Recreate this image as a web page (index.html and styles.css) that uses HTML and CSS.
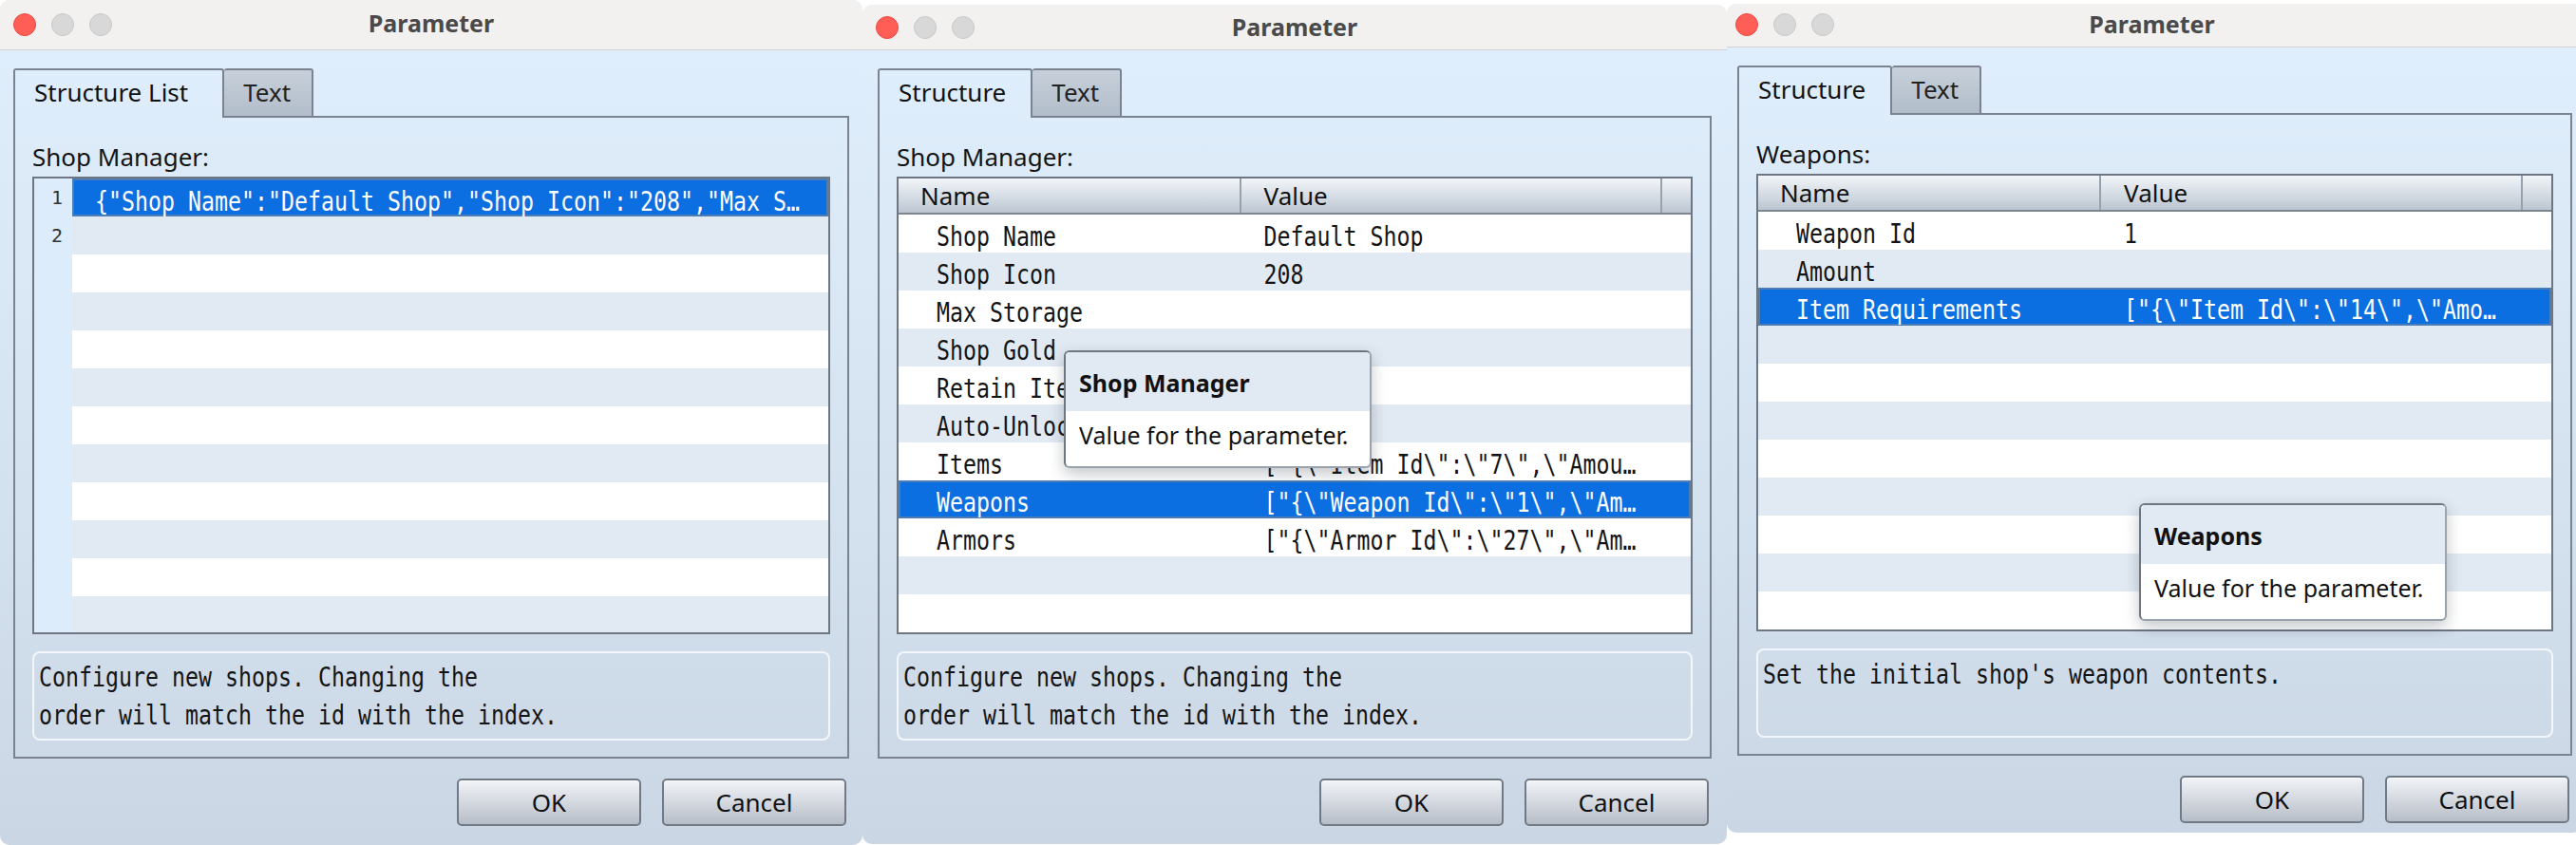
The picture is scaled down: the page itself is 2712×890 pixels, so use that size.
FILE: index.html
```html
<!DOCTYPE html>
<html lang="en">
<head>
  <meta charset="UTF-8" />
  <meta name="viewport" content="width=device-width, initial-scale=1.0" />
  <title>Parameter</title>
  <link rel="stylesheet" href="styles.css">
</head>
<body>
  <div class="desktop">

    <!-- structure list editor -->
    <div class="window first">
      <div class="titlebar">
        <div class="lights"><span class="dot close"></span><span class="dot"></span><span class="dot"></span></div>
        <div class="title">Parameter</div>
      </div>
      <div class="win-body">
        <div class="tabs">
          <div class="tab active wide">Structure List</div>
          <div class="tab">Text</div>
          <div class="tab-fill"></div>
        </div>
        <div class="panel">
          <div class="field-label">Shop Manager:</div>
          <div class="list-box">
            <div class="gutter">
              <div class="ln">1</div>
              <div class="ln">2</div>
            </div>
            <div class="lines">
              <div class="line selected"><span class="mono">{"Shop Name":"Default Shop","Shop Icon":"208","Max S…</span></div>
              <div class="line"></div>
              <div class="line"></div>
              <div class="line"></div>
              <div class="line"></div>
              <div class="line"></div>
              <div class="line"></div>
              <div class="line"></div>
              <div class="line"></div>
              <div class="line"></div>
              <div class="line"></div>
              <div class="line"></div>
            </div>
          </div>
          <div class="desc">
            <div class="mono">Configure new shops. Changing the</div>
            <div class="mono">order will match the id with the index.</div>
          </div>
        </div>
        <div class="buttons">
          <button>OK</button>
          <button>Cancel</button>
        </div>
      </div>
    </div>

    <!-- shop manager structure -->
    <div class="window second">
      <div class="titlebar">
        <div class="lights"><span class="dot close"></span><span class="dot"></span><span class="dot"></span></div>
        <div class="title">Parameter</div>
      </div>
      <div class="win-body">
        <div class="tabs">
          <div class="tab active">Structure</div>
          <div class="tab">Text</div>
          <div class="tab-fill"></div>
        </div>
        <div class="panel">
          <div class="field-label">Shop Manager:</div>
          <div class="table-box">
            <div class="thead">
              <div class="th">Name</div>
              <div class="th">Value</div>
              <div class="th"></div>
            </div>
            <div class="tbody">
              <div class="tr"><div class="td mono">Shop Name</div><div class="td mono">Default Shop</div></div>
              <div class="tr"><div class="td mono">Shop Icon</div><div class="td mono">208</div></div>
              <div class="tr"><div class="td mono">Max Storage</div><div class="td mono"></div></div>
              <div class="tr"><div class="td mono">Shop Gold</div><div class="td mono"></div></div>
              <div class="tr"><div class="td mono">Retain Items</div><div class="td mono"></div></div>
              <div class="tr"><div class="td mono">Auto-Unlock</div><div class="td mono"></div></div>
              <div class="tr"><div class="td mono">Items</div><div class="td mono">["{\"Item Id\":\"7\",\"Amou…</div></div>
              <div class="tr selected"><div class="td mono">Weapons</div><div class="td mono">["{\"Weapon Id\":\"1\",\"Am…</div></div>
              <div class="tr"><div class="td mono">Armors</div><div class="td mono">["{\"Armor Id\":\"27\",\"Am…</div></div>
              <div class="tr"></div>
              <div class="tr"></div>
            </div>
            <div class="tooltip tip-shop">
              <div class="tip-head">Shop Manager</div>
              <div class="tip-text">Value for the parameter.</div>
            </div>
          </div>
          <div class="desc">
            <div class="mono">Configure new shops. Changing the</div>
            <div class="mono">order will match the id with the index.</div>
          </div>
        </div>
        <div class="buttons">
          <button>OK</button>
          <button>Cancel</button>
        </div>
      </div>
    </div>

    <!-- weapons structure -->
    <div class="window third">
      <div class="titlebar">
        <div class="lights"><span class="dot close"></span><span class="dot"></span><span class="dot"></span></div>
        <div class="title">Parameter</div>
      </div>
      <div class="win-body">
        <div class="tabs">
          <div class="tab active">Structure</div>
          <div class="tab">Text</div>
          <div class="tab-fill"></div>
        </div>
        <div class="panel">
          <div class="field-label">Weapons:</div>
          <div class="table-box">
            <div class="thead">
              <div class="th">Name</div>
              <div class="th">Value</div>
              <div class="th"></div>
            </div>
            <div class="tbody">
              <div class="tr"><div class="td mono">Weapon Id</div><div class="td mono">1</div></div>
              <div class="tr"><div class="td mono">Amount</div><div class="td mono"></div></div>
              <div class="tr selected"><div class="td mono">Item Requirements</div><div class="td mono">["{\"Item Id\":\"14\",\"Amo…</div></div>
              <div class="tr"></div>
              <div class="tr"></div>
              <div class="tr"></div>
              <div class="tr"></div>
              <div class="tr"></div>
              <div class="tr"></div>
              <div class="tr"></div>
              <div class="tr"></div>
            </div>
            <div class="tooltip tip-weapons">
              <div class="tip-head">Weapons</div>
              <div class="tip-text">Value for the parameter.</div>
            </div>
          </div>
          <div class="desc">
            <div class="mono">Set the initial shop's weapon contents.</div>
          </div>
        </div>
        <div class="buttons">
          <button>OK</button>
          <button>Cancel</button>
        </div>
      </div>
    </div>

  </div>
</body>
</html>
```

FILE: styles.css
```css
* {
  box-sizing: border-box;
}

body {
  margin: 0;
  width: 2712px;
  height: 890px;
  overflow: hidden;
  background: #ffffff;
  font-family: "Noto Sans", "DejaVu Sans", sans-serif;
  font-size: 26px;
  color: #141414;
}

.desktop {
  display: flex;
  align-items: flex-start;
}

/* window frame */
.window {
  display: flex;
  flex-direction: column;
  flex-shrink: 0;
  height: 890px;
  border-radius: 10px;
  overflow: hidden;
  background: linear-gradient(#e0effd, #dbe9f7 30%, #cad6e3);
}

.window.first {
  width: 908px;
}

.window.second {
  width: 910px;
  height: 884px;
  margin-top: 5px;
}

.window.third {
  width: 900px;
  height: 873px;
  margin-top: 4px;
}

.titlebar {
  display: grid;
  grid-template-columns: 1fr auto 1fr;
  align-items: center;
  height: 53px;
  padding: 0 14px 5px;
  background: #f2f1f0;
  border-bottom: 1px solid #d3d3d3;
}

.second .titlebar {
  height: 48px;
  padding: 0 14px 2px;
}

.third .titlebar {
  height: 46px;
  padding: 0 14px 4px 9px;
}

.lights {
  display: flex;
  gap: 16px;
  margin-top: 5px;
}

.second .lights,
.third .lights {
  margin-top: 2px;
}

.dot {
  width: 24px;
  height: 24px;
  border-radius: 50%;
  background: #d8d8d8;
  border: 1px solid #c8c8c8;
}

.dot.close {
  background: #fe5e56;
  border-color: #e9493f;
}

.title {
  font-size: 25px;
  font-weight: bold;
  color: #4a4a4a;
}

.win-body {
  flex: 1;
  display: flex;
  flex-direction: column;
  padding: 19px 14px 0;
}

.second .win-body {
  padding: 19px 16px 0;
}

.third .win-body {
  padding: 19px 10px 0 11px;
}

/* tabs */
.tabs {
  display: flex;
  height: 52px;
}

.tab {
  padding: 0 22px 4px 20px;
  line-height: 46px;
  border: 2px solid #7a838f;
  border-radius: 3px 3px 0 0;
  background: linear-gradient(#c7d0da, #b1bdca);
  color: #222;
}

.tab.active {
  border-bottom: none;
  background: transparent;
  color: #111;
  padding-right: 26px;
}

.tab.wide {
  padding-right: 36px;
}

.tab.active + .tab {
  border-left: none;
}

.tab-fill {
  flex: 1;
  border-bottom: 2px solid #7a838f;
}

.panel {
  border: 2px solid #7a838f;
  border-top: none;
  padding: 26px 18px 17px;
}

.field-label {
  line-height: 30px;
  margin-bottom: 6px;
}

/* monospaced text, drawn a little taller than the font */
.mono {
  font-family: "DejaVu Sans Mono", "Liberation Mono", monospace;
  font-size: 23.25px;
  white-space: nowrap;
  transform: scaleY(1.22);
}

/* line list */
.list-box {
  display: grid;
  grid-template-columns: 40px 1fr;
  height: 482px;
  border: 2px solid #6d7681;
  background: #ffffff;
  overflow: hidden;
}

.gutter {
  background: #dcecfb;
}

.ln {
  height: 40px;
  line-height: 40px;
  padding-right: 10px;
  text-align: right;
  font-family: "DejaVu Sans Mono", monospace;
  font-size: 20px;
  color: #333;
}

.line {
  height: 40px;
  padding: 5px 0 0 24px;
  line-height: 35px;
}

.line:nth-child(even) {
  background: #e1e9f2;
}

.line .mono {
  display: inline-block;
}

/* name / value table */
.table-box {
  position: relative;
  height: 482px;
  border: 2px solid #6d7681;
  background: #ffffff;
}

.tbody {
  height: 440px;
  overflow: hidden;
}

.thead {
  display: grid;
  grid-template-columns: 43% 1fr 32px;
  height: 38px;
  background: linear-gradient(#f2f5f9, #bcc6d1);
  border-bottom: 2px solid #7c8590;
}

.th {
  line-height: 36px;
  padding-left: 23px;
  border-left: 2px solid #98a2ae;
  color: #111;
}

.th:first-child {
  border-left: none;
}

.th:nth-child(2) {
  padding-left: 24px;
}

.tr {
  display: grid;
  grid-template-columns: 43% 1fr;
  height: 40px;
}

.tr:nth-child(even) {
  background: #e1e9f2;
}

.td {
  height: 40px;
  padding-top: 5px;
  line-height: 35px;
  overflow: hidden;
}

.td:first-child {
  padding-left: 40px;
}

.td:nth-child(2) {
  padding-left: 26px;
}

/* current row, in the list and in the tables */
.line.selected,
.tr.selected,
.tr.selected:nth-child(even) {
  background: #0b6fe2;
  color: #ffffff;
  box-shadow: inset 0 0 0 2px #4c7db4;
}

/* hover help */
.tooltip {
  position: absolute;
  width: 324px;
  border: 2px solid #6e7681;
  border-right-color: #9aa3ad;
  border-bottom-color: #9aa3ad;
  border-radius: 6px;
  overflow: hidden;
  background: #ffffff;
  box-shadow: 0 6px 16px rgba(40, 50, 60, 0.28);
  font-size: 25px;
  color: #111;
}

.tip-shop {
  left: 174px;
  top: 181px;
}

.tip-weapons {
  left: 401px;
  top: 345px;
}

.tip-head {
  height: 62px;
  padding: 2px 0 0 14px;
  line-height: 60px;
  font-weight: bold;
  background: #e1e9f2;
}

.tip-text {
  height: 58px;
  padding-left: 14px;
  line-height: 50px;
}

/* help text */
.desc {
  height: 94px;
  margin-top: 18px;
  padding: 5px 5px 0;
  border: 2px solid #f3f7fb;
  border-radius: 8px;
}

.desc .mono {
  line-height: 40px;
}

/* dialog buttons */
.buttons {
  display: flex;
  justify-content: flex-end;
  gap: 22px;
  padding: 21px 3px 0 0;
}

button {
  width: 194px;
  height: 50px;
  font-family: "Noto Sans", "DejaVu Sans", sans-serif;
  font-size: 26px;
  color: #111;
  border: 2px solid #707a86;
  border-radius: 5px;
  background: linear-gradient(#f1f4f8, #b7bdc7);
  box-shadow: inset 0 1px 0 #ffffff;
  padding: 0;
}
```
